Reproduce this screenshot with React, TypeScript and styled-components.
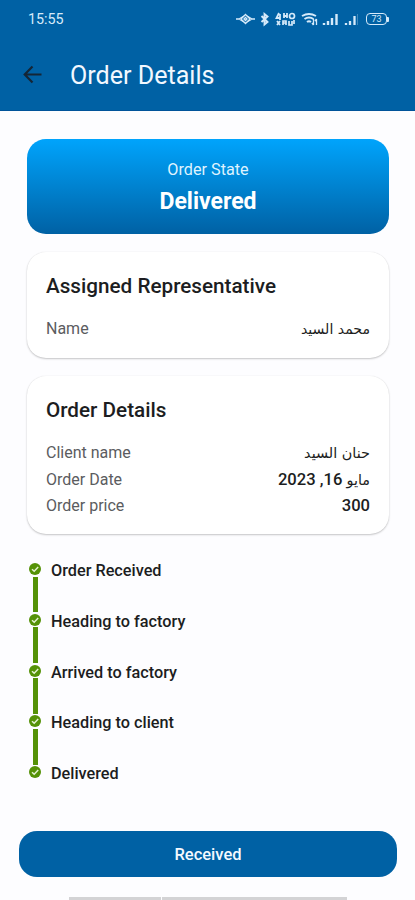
import React from 'react';
import styled, { createGlobalStyle } from 'styled-components';

const GlobalStyle = createGlobalStyle`
  * { box-sizing: border-box; }
  body {
    margin: 0;
    background: #fdfdff;
    font-family: Roboto, "DejaVu Sans", sans-serif;
    color: #1c1d21;
  }
`;

const Screen = styled.div`
  display: flex;
  flex-direction: column;
  width: 415px;
  height: 900px;
  overflow: hidden;
`;

const Header = styled.header`
  height: 111px;
  flex: none;
  background: #0061a4;
  border-bottom: 1px solid #00549a;
`;

const StatusBar = styled.div`
  display: flex;
  align-items: center;
  justify-content: space-between;
  height: 38px;
  padding: 0 26px 0 28px;
  color: #d5eafa;
`;

const Clock = styled.span`
  font-size: 14.3px;
  line-height: 16px;
`;

const StatusIcons = styled.div`
  display: flex;
  align-items: center;

  svg { display: block; }
`;

const Battery = styled.span`
  display: flex;
  align-items: center;
  justify-content: center;
  width: 21px;
  height: 12px;
  margin-left: 8px;
  border: 1.5px solid #d5eafa;
  border-radius: 4px;
  font-size: 9px;
  line-height: 9px;
`;

const BatteryTip = styled.span`
  width: 2px;
  height: 5px;
  border-radius: 0 1px 1px 0;
  background: #d5eafa;
`;

const TitleBar = styled.div`
  display: flex;
  align-items: center;
  height: 74px;
  padding-left: 23px;
`;

const Title = styled.h1`
  margin: 2px 0 0 28px;
  font-size: 25.1px;
  font-weight: 400;
  line-height: 30px;
  color: #f2f8ff;
`;

const Content = styled.main`
  display: flex;
  flex-direction: column;
  flex: 1;
  padding: 28px 26px 0 27px;
`;

const StateBanner = styled.section`
  display: flex;
  flex-direction: column;
  align-items: center;
  height: 95px;
  padding-top: 21px;
  border-radius: 19px;
  background: linear-gradient(#00a4fc, #0061a4);
  color: #fff;
`;

const StateLabel = styled.span`
  font-size: 16.2px;
  line-height: 20px;
  color: #dff3ff;
`;

const StateValue = styled.strong`
  margin-top: 8px;
  font-size: 23px;
  font-weight: 700;
  line-height: 28px;
`;

const Card = styled.section<{ $height: number; $gap: number }>`
  height: ${({ $height }) => $height}px;
  margin-top: ${({ $gap }) => $gap}px;
  padding: 20px 19px 0 19px;
  border-radius: 19px;
  background: #fff;
  box-shadow: 0 1px 2px rgba(0, 0, 0, 0.22), 0 0 1px rgba(0, 0, 0, 0.1);
`;

const CardTitle = styled.h2`
  margin: 0 0 16px;
  font-size: 20.7px;
  font-weight: 500;
  line-height: 28px;
`;

const Row = styled.div`
  display: flex;
  justify-content: space-between;
  height: 26.5px;
  font-size: 16px;
  line-height: 26px;
`;

const RowLabel = styled.span`
  color: #5b5c60;
`;

const RowValue = styled.span<{ $arabic?: boolean }>`
  direction: ${({ $arabic }) => ($arabic ? 'rtl' : 'ltr')};
  font-size: 16.6px;
  font-weight: ${({ $arabic }) => ($arabic ? 400 : 500)};
`;

const DateValue = styled(RowValue)`
  font-weight: 500;
`;

const ArabicText = styled.span<{ $size: number }>`
  font-family: "DejaVu Sans", sans-serif;
  font-size: ${({ $size }) => $size}px;
  font-weight: 400;
  line-height: 20px;
`;

const Timeline = styled.ol`
  margin: 29px 0 0 2px;
  padding: 0;
  list-style: none;
`;

const Step = styled.li`
  display: flex;
  height: 50.8px;
`;

const Track = styled.span`
  display: flex;
  flex-direction: column;
  align-items: center;
  width: 12px;

  svg { display: block; flex: none; }
`;

const Connector = styled.span`
  flex: 1;
  width: 5px;
  margin: 1.5px 0;
  background: #559207;
`;

const StepLabel = styled.span`
  margin-left: 10px;
  font-size: 16.25px;
  font-weight: 500;
  line-height: 15px;
`;

const Footer = styled.footer`
  display: flex;
  flex-direction: column;
  align-items: center;
  height: 69px;
  padding: 0 18px 0 19px;
`;

const ReceivedButton = styled.button`
  flex: none;
  width: 100%;
  height: 46px;
  padding: 2px 0 0;
  border: 0;
  border-radius: 18px;
  background: #0061a4;
  color: #f4f9ff;
  font: 500 16.5px/44px Roboto, sans-serif;
`;

const NavHandle = styled.div`
  display: flex;
  gap: 1px;
  width: 278px;
  height: 3px;
  margin-top: 20px;
`;

const HandlePart = styled.span<{ $grow: number }>`
  flex: ${({ $grow }) => $grow};
  background: #d3d3d5;
`;

const steps = ['Order Received', 'Heading to factory', 'Arrived to factory', 'Heading to client', 'Delivered'];

const StatusGlyphs = () => (
  <svg width="122" height="18" viewBox="0 0 122 18" fill="none" stroke="#d5eafa" strokeWidth="1.3">
    <path d="M0 9h4M15 9h4M3 9l5-3M3 9l5 3M11 6l5 3-5 3" />
    <path d="M9.500 4.500L14 9l-4.500 4.500L5 9zM8 9l1.500-1.500L11 9l-1.500 1.500z" />
    <path d="M25.500 6l6 6-3 2.500V4l3 2.500-6 5.500" strokeWidth="1.900" />
    <path d="M43 3l-2.500 5h4M44 4v6M48 3v5M51 3v5M48 6h3" strokeWidth="1.800" />
    <circle cx="56" cy="6" r="2.500" strokeWidth="1.700" />
    <path d="M41 11l3 4M44 11l-3 4M47 15v-4h3v4M47 13h3M53 11v4h3v-4M58 10v4" strokeWidth="1.700" />
    <path d="M66 6q7-4 14 0M68.500 9q4.500-3 9 0M71 12q2-1.500 4 0" strokeWidth="2" />
    <path d="M77.500 9v6M76 13l1.500 2M80.500 15V9M79 11l1.500-2" strokeWidth="1.300" />
    <path d="M88 15v-2M92 15v-4M96 15V8M100.500 15V4" strokeWidth="2.400" />
    <path d="M110 15v-2M114 15v-4M118.500 15V6" strokeWidth="2.300" />
    <path d="M121.500 15V4" strokeWidth="1" opacity=".3" />
  </svg>
);

const BackArrow = () => (
  <svg width="19" height="20" viewBox="0 0 19 20" fill="none" stroke="#142636" strokeWidth="2.200">
    <path d="M18.500 9.500H2M9.500 1.500L1.700 9.500l7.800 8" />
  </svg>
);

const CheckDot = () => (
  <svg width="12" height="12" viewBox="0 0 12 12">
    <circle cx="6" cy="6" r="6" fill="#559207" />
    <path d="M3 6.200l2.200 2L9.200 4" fill="none" stroke="#e5f2d2" strokeWidth="1.500" />
  </svg>
);

export default function App() {
  return (
    <>
      <GlobalStyle />
      <Screen>
        <Header>
          <StatusBar>
            <Clock>15:55</Clock>
            <StatusIcons>
              <StatusGlyphs />
              <Battery>73</Battery>
              <BatteryTip />
            </StatusIcons>
          </StatusBar>
          <TitleBar>
            <BackArrow />
            <Title>Order Details</Title>
          </TitleBar>
        </Header>
        <Content>
          <StateBanner>
            <StateLabel>Order State</StateLabel>
            <StateValue>Delivered</StateValue>
          </StateBanner>
          <Card $height={106} $gap={18}>
            <CardTitle>Assigned Representative</CardTitle>
            <Row>
              <RowLabel>Name</RowLabel>
              <RowValue $arabic><ArabicText $size={14.1}>محمد السيد</ArabicText></RowValue>
            </Row>
          </Card>
          <Card $height={158} $gap={18}>
            <CardTitle>Order Details</CardTitle>
            <Row>
              <RowLabel>Client name</RowLabel>
              <RowValue $arabic><ArabicText $size={14.4}>حنان السيد</ArabicText></RowValue>
            </Row>
            <Row>
              <RowLabel>Order Date</RowLabel>
              <DateValue $arabic><ArabicText $size={14.4}>مايو</ArabicText> 16, 2023</DateValue>
            </Row>
            <Row>
              <RowLabel>Order price</RowLabel>
              <RowValue>300</RowValue>
            </Row>
          </Card>
          <Timeline>
            {steps.map((step, index) => (
              <Step key={step}>
                <Track>
                  <CheckDot />
                  {index < steps.length - 1 && <Connector />}
                </Track>
                <StepLabel>{step}</StepLabel>
              </Step>
            ))}
          </Timeline>
        </Content>
        <Footer>
          <ReceivedButton>Received</ReceivedButton>
          <NavHandle>
            <HandlePart $grow={92} />
            <HandlePart $grow={185} />
          </NavHandle>
        </Footer>
      </Screen>
    </>
  );
}
